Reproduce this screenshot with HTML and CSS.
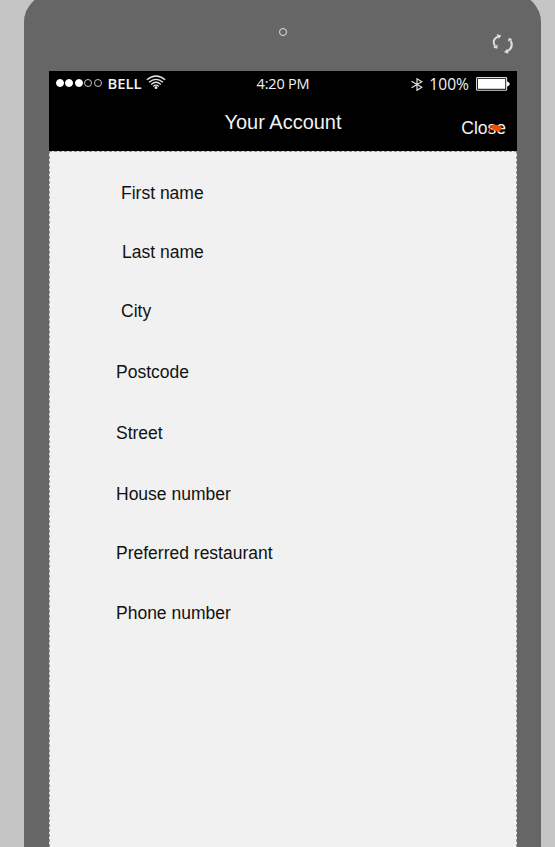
FILE: index.html
```html
<!DOCTYPE html>
<html lang="en">
<head>
<meta charset="utf-8">
<title>Your Account</title>
<link rel="stylesheet" href="styles.css">
</head>
<body>
<div class="device">
  <div class="bezel">
    <span class="camera"></span>
    <svg class="rotate" width="22" height="22" viewBox="0 0 22 22" fill="none" stroke="#dedede" stroke-width="2">
      <path d="M6 3.6C1.4 5.5.8 9 3 13.5M18.6 7.5C20.8 12 19.4 16 15 18.3"/>
      <path d="M4.5 1 9.3 2.6 6.8 5.8ZM1.2 14.8 5.7 11.4 5.3 15.8ZM15.8 8.5 16.8 4.8 20.4 6.2ZM15.2 15.8 12 19.3 16.7 20.8Z" fill="#dedede" stroke="none"/>
    </svg>
  </div>
  <main class="screen">
    <header>
      <div class="status">
        <div class="carrier">
          <span class="dots"><i class="full"></i><i class="full"></i><i class="full"></i><i></i><i></i></span>
          <span class="network">BELL</span>
          <svg class="wifi" width="20" height="15" viewBox="0 0 20 15" fill="none" stroke="#e4e4e4" stroke-width="1.3">
            <path d="M.8 4.8Q10-2.8 19.2 4.8M3 7.2Q10 1.4 17 7.2M5.2 9.4Q10 5.2 14.8 9.4M7.2 11.4Q10 9 12.8 11.4"/><circle cx="10" cy="12.7" r="1.4" fill="#eee" stroke="none"/>
          </svg>
        </div>
        <span class="time">4:20 PM</span>
        <div class="power">
          <svg class="bluetooth" width="12" height="13" viewBox="0 0 12 13" fill="none" stroke="#ddd" stroke-width="1.2"><path d="M.5 3.2 10.8 9.3 6 12.3V.8L10.8 3.7.5 9.7"/></svg>
          <span class="percent">100%</span>
          <svg class="battery" width="34" height="14" viewBox="0 0 34 14"><rect x=".6" y=".6" width="30" height="12.6" rx=".8" fill="#000" stroke="#ddd" stroke-width="1.1"/><rect x="2" y="2" width="27.3" height="9.8" fill="#fff"/><path d="M31 4.3 33.6 6V8L31 9.7Z" fill="#fff"/></svg>
        </div>
      </div>
      <div class="nav">
        <h1>Your Account</h1>
        <span class="close">Close
          <svg class="marker" width="15" height="9" viewBox="0 0 15 9"><path d="M1 8.6Q1.5 2 6 1.2" fill="none" stroke="#ec4300" stroke-width="1.5"/><path d="M3.2 2.8 5.5.7 10.3 1 11 2.2 14 2.5 12.5 6.6 10.5 7.8 4.5 5.6Z" fill="#f64b00"/></svg>
        </span>
      </div>
    </header>
    <section class="fields">
      <div class="inset">First name</div>
      <div class="inset last">Last name</div>
      <div class="inset city">City</div>
      <div>Postcode</div>
      <div>Street</div>
      <div class="house">House number</div>
      <div class="restaurant">Preferred restaurant</div>
      <div>Phone number</div>
    </section>
  </main>
</div>
</body>
</html>
```
FILE: styles.css
```css
* { box-sizing: border-box; }
body {
  margin: 0;
  background: #c5c5c5;
  font-family: "Liberation Sans", Arial, sans-serif;
}
.device {
  width: 517px;
  height: 853px;
  margin: -6px 0 0 24px;
  padding: 6px 24px 0 25px;
  border-radius: 28px 28px 0 0;
  background: #666;
}
.bezel {
  position: relative;
  height: 71px;
  display: flex;
  justify-content: center;
}
.camera {
  width: 8px;
  height: 8px;
  margin: 28px 1px 0 0;
  border: 1.5px solid #e4e4e4;
  border-radius: 50%;
}
.rotate { position: absolute; right: 3px; top: 33px; }
.screen { height: 776px; background: #f1f1f1; }
header { height: 80px; background: #000; color: #f2f2f2; }
.status {
  height: 27px;
  padding: 0 7px;
  display: grid;
  grid-template-columns: 1fr auto 1fr;
  align-items: center;
  font: 15px/25px "Open Sans", sans-serif;
}
.carrier, .power, .dots { display: flex; align-items: center; }
.carrier { height: 25px; margin-top: -3px; }
.dots { gap: 1.4px; }
.dots i { width: 8px; height: 8px; border: 1.2px solid #c8c8c8; border-radius: 50%; }
.dots .full { background: #fff; border-color: #fff; }
.network { margin-left: 6px; font-size: 14.8px; font-weight: 600; }
.wifi { margin: -2px 0 0 4px; }
.time { margin-top: -2px; font-size: 14.5px; letter-spacing: -.2px; }
.power { margin-top: -1px; justify-content: flex-end; }
.percent { margin: 0 7px 0 6px; font-size: 15.6px; font-weight: 500; }
.nav { height: 53px; display: grid; grid-template-columns: 1fr auto 1fr; }
h1 { grid-column: 2; margin: 13px 0 0; font-size: 20px; font-weight: 400; line-height: 23px; }
.close { position: relative; justify-self: end; margin: 19px 11px 0 0; font-size: 17.5px; line-height: 23px; }
.marker { position: absolute; left: 27px; top: 7px; }
.fields {
  height: 696px;
  padding: 31px 0 0 66px;
  border: 1px dashed #999;
  border-bottom: 0;
  display: flex;
  flex-direction: column;
  color: #111;
  font-size: 17.5px;
  line-height: 20px;
}
.fields div { margin-bottom: 41px; }
.fields .inset { margin: 0 0 39px 5px; }
.fields .last { margin-left: 6px; }
.fields .city { margin-bottom: 41px; }
.fields .house { margin-bottom: 39px; }
.fields .restaurant { margin-bottom: 40px; }
```
